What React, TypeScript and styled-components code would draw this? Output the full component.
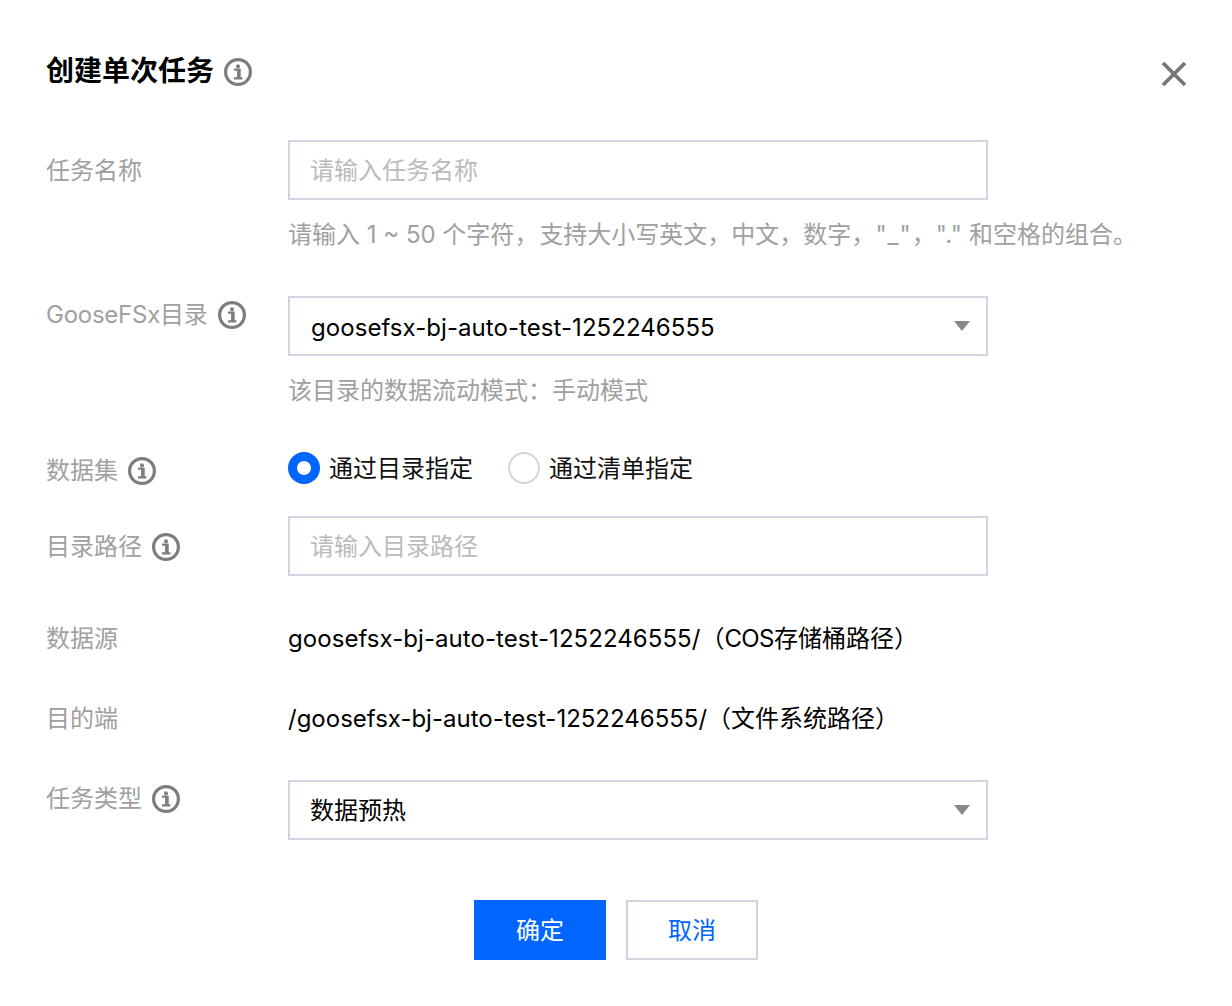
import styled, { createGlobalStyle } from 'styled-components';

const GlobalStyle = createGlobalStyle`
  html, body {
    margin: 0;
    padding: 0;
    background: #fff;
  }
  body {
    font-family: Inter, "Noto Sans CJK SC", sans-serif;
    font-size: 24px;
    color: #000;
  }
`;

const Dialog = styled.div`
  width: 1232px;
  height: 1006px;
  box-sizing: border-box;
  padding: 49px 46px 0;
  position: relative;
`;

const Header = styled.div`
  display: flex;
  align-items: center;
  height: 44px;
  margin-bottom: 47px;
  & svg {
    margin-top: 2px;
  }
`;

const Title = styled.h2`
  margin: 0 10px 0 0;
  font-size: 28px;
  line-height: 44px;
  font-weight: 700;
  color: #000;
`;

const CloseButton = styled.span`
  position: absolute;
  top: 60px;
  right: 44px;
  width: 28px;
  height: 28px;
  cursor: pointer;
  & svg {
    display: block;
  }
`;

const Row = styled.div<{ $top: number }>`
  display: flex;
  margin-top: ${({ $top }) => $top}px;
`;

const Label = styled.div<{ $height: number }>`
  width: 242px;
  flex: none;
  height: ${({ $height }) => $height}px;
  box-sizing: border-box;
  padding-top: 2px;
  display: flex;
  align-items: center;
  gap: 10px;
  color: #a0a0a0;
  line-height: 36px;
`;

const Field = styled.div`
  width: 700px;
  flex: none;
`;

const Input = styled.input`
  display: block;
  width: 700px;
  height: 60px;
  box-sizing: border-box;
  border: 2px solid #cfd5de;
  border-radius: 0;
  outline: none;
  padding: 0 20px;
  font: inherit;
  color: #000;
  &::placeholder {
    color: #bbb;
    opacity: 1;
  }
`;

const Select = styled.div`
  width: 700px;
  height: 60px;
  box-sizing: border-box;
  border: 2px solid #cfd5de;
  padding: 0 20px;
  display: flex;
  align-items: center;
  justify-content: space-between;
  color: #000;
`;

const SelectText = styled.span<{ $cjk?: boolean }>`
  padding: ${({ $cjk }) => ($cjk ? '0 0 4px' : '2px 0 0 1px')};
`;

const Caret = styled.span`
  width: 0;
  height: 0;
  margin-right: -4px;
  border-left: 8px solid transparent;
  border-right: 8px solid transparent;
  border-top: 10px solid #888;
`;

const Hint = styled.div`
  margin-top: 17px;
  line-height: 36px;
  color: #a0a0a0;
  white-space: nowrap;
`;

const Spaced = styled.span<{ $gap: number }>`
  letter-spacing: ${({ $gap }) => $gap}px;
`;

const Value = styled.div`
  height: 36px;
  line-height: 38px;
  white-space: nowrap;
`;

const RadioGroup = styled.div`
  display: flex;
  align-items: center;
  height: 40px;
  gap: 35px;
`;

const RadioItem = styled.label`
  display: flex;
  align-items: center;
  gap: 9px;
  color: #111;
`;

const RadioText = styled.span`
  padding-bottom: 4px;
`;

const RadioDot = styled.span<{ $checked?: boolean }>`
  width: 32px;
  height: 32px;
  box-sizing: border-box;
  border-radius: 50%;
  border: ${({ $checked }) =>
    $checked ? '9px solid #0066ff' : '2px solid #cfd5de'};
  background: #fff;
`;

const Footer = styled.div`
  display: flex;
  justify-content: center;
  gap: 20px;
  margin-top: 60px;
`;

const Button = styled.button<{ $primary?: boolean }>`
  width: 132px;
  height: 60px;
  box-sizing: border-box;
  border: 2px solid ${({ $primary }) => ($primary ? '#0066ff' : '#cfd5de')};
  border-radius: 0;
  padding: 0 0 4px;
  background: ${({ $primary }) => ($primary ? '#0066ff' : '#fff')};
  color: ${({ $primary }) => ($primary ? '#fff' : '#0066ff')};
  font: inherit;
  cursor: pointer;
`;

const InfoIcon = () => (
  <svg width='28' height='28' viewBox='0 0 28 28' fill='none'>
    <circle cx='14' cy='14' r='12.4' stroke='#7d7d7d' strokeWidth='3.2' />
    <circle cx='14' cy='8.2' r='2' fill='#7d7d7d' />
    <path
      d='M10 11.6h5.6v8M10 20.4h8.4M14.2 12v8'
      stroke='#7d7d7d'
      strokeWidth='2.2'
    />
  </svg>
);

const App = () => {
  return (
    <Dialog>
      <GlobalStyle />
      <Header>
        <Title>创建单次任务</Title>
        <InfoIcon />
      </Header>
      <CloseButton title='关闭'>
        <svg width='28' height='28' viewBox='0 0 28 28' fill='none'>
          <path d='M3 3l22 22M25 3L3 25' stroke='#777' strokeWidth='3.8' />
        </svg>
      </CloseButton>

      <Row $top={0}>
        <Label $height={60}>任务名称</Label>
        <Field>
          <Input placeholder='请输入任务名称' />
          <Hint>
            请输入 1 ~ 50 个字符<Spaced $gap={1}>，</Spaced>支持大小写英文，中文，数字，
            <Spaced $gap={1}>"_"</Spaced>，<Spaced $gap={0.4}>"."</Spaced> 和空格的组合。
          </Hint>
        </Field>
      </Row>

      <Row $top={43}>
        <Label $height={36}>
          <Spaced $gap={-0.25}>GooseFSx目录</Spaced>
          <InfoIcon />
        </Label>
        <Field>
          <Select>
            <SelectText>
              <Spaced $gap={0.06}>goosefsx-bj-auto-test-1252246555</Spaced>
            </SelectText>
            <Caret />
          </Select>
          <Hint>该目录的数据流动模式：手动模式</Hint>
        </Field>
      </Row>

      <Row $top={39}>
        <Label $height={44}>
          数据集 <InfoIcon />
        </Label>
        <RadioGroup>
          <RadioItem>
            <RadioDot $checked />
            <RadioText>通过目录指定</RadioText>
          </RadioItem>
          <RadioItem>
            <RadioDot />
            <RadioText>通过清单指定</RadioText>
          </RadioItem>
        </RadioGroup>
      </Row>

      <Row $top={24}>
        <Label $height={60}>
          目录路径 <InfoIcon />
        </Label>
        <Input placeholder='请输入目录路径' />
      </Row>

      <Row $top={44}>
        <Label $height={36}>数据源</Label>
        <Value>
          <Spaced $gap={0.06}>goosefsx-bj-auto-test-1252246555/</Spaced>（
          <Spaced $gap={-0.6}>COS</Spaced>存储桶路径）
        </Value>
      </Row>

      <Row $top={44}>
        <Label $height={36}>目的端</Label>
        <Value>/goosefsx-bj-auto-test-1252246555/（文件系统路径）</Value>
      </Row>

      <Row $top={44}>
        <Label $height={36}>
          任务类型 <InfoIcon />
        </Label>
        <Select>
          <SelectText $cjk>数据预热</SelectText>
          <Caret />
        </Select>
      </Row>

      <Footer>
        <Button $primary>确定</Button>
        <Button>取消</Button>
      </Footer>
    </Dialog>
  );
};

export default App;
